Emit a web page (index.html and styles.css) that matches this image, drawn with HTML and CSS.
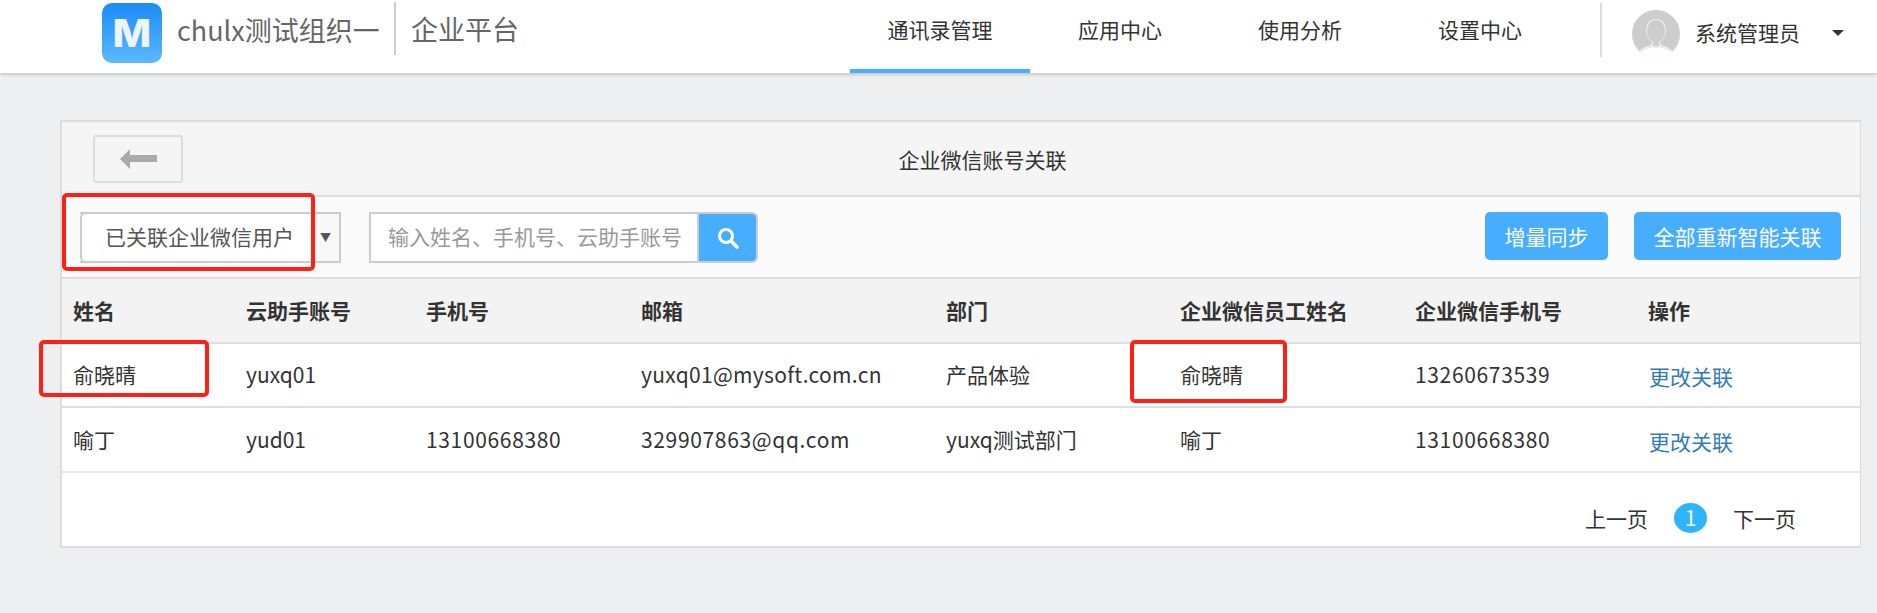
FILE: index.html
```html
<!DOCTYPE html>
<html lang="zh-CN">
<head>
<meta charset="utf-8">
<title>企业微信账号关联</title>
<link rel="stylesheet" href="styles.css">
</head>
<body>
<header class="topbar">
  <div class="brand">
    <div class="logo"><span class="logo-m">M</span></div>
    <span class="org">chulx测试组织一</span>
    <span class="platform">企业平台</span>
  </div>
  <nav class="nav">
    <a class="nav-item active">通讯录管理</a>
    <a class="nav-item">应用中心</a>
    <a class="nav-item">使用分析</a>
    <a class="nav-item">设置中心</a>
  </nav>
  <div class="user">
    <svg class="avatar" viewBox="0 0 48 48" aria-hidden="true">
      <defs><clipPath id="disc"><circle cx="24" cy="24" r="24"/></clipPath></defs>
      <circle cx="24" cy="24" r="24" fill="#cdcdcd"/>
      <g clip-path="url(#disc)">
        <path d="M4 49 C5 39 13 37 19 35 C20 33 20 32 19 31 C16 28 14 25 14 20 C14 13 18 9 24 9 C30 9 34 13 34 20 C34 25 32 28 29 31 C28 32 28 33 29 35 C35 37 43 39 44 49 Z" fill="#ececec"/>
        <ellipse cx="24" cy="21" rx="9" ry="11" fill="#cdcdcd"/>
        <path d="M21 29 H27 V36 H21 Z" fill="#cdcdcd"/>
        <path d="M3 49 C6 41 14 40 20 37 C22 39 26 39 28 37 C34 40 42 41 45 49 Z" fill="#fff"/>
      </g>
    </svg>
    <span class="user-name">系统管理员</span>
    <span class="caret"></span>
  </div>
</header>

<main class="main">
  <section class="panel">
    <div class="title-bar">
      <button class="back" type="button" aria-label="返回">
        <svg width="37" height="20" viewBox="0 0 37 20" aria-hidden="true"><path d="M0 10 L10 0 L10 6 L37 6 L37 13 L10 13 L10 20 Z" fill="#aaa"/></svg>
      </button>
      <h1 class="title">企业微信账号关联</h1>
    </div>

    <div class="toolbar">
      <div class="select">
        <span class="select-value">已关联企业微信用户</span>
        <span class="select-arrow">▼</span>
      </div>
      <div class="search">
        <span class="search-input">输入姓名、手机号、云助手账号</span>
        <button class="search-btn" type="button" aria-label="搜索">
          <svg width="22" height="22" viewBox="0 0 22 22" aria-hidden="true"><circle cx="9" cy="9" r="6.500" fill="none" stroke="#fff" stroke-width="3"/><path d="M14 14 L20 20" stroke="#fff" stroke-width="3.500" stroke-linecap="round"/></svg>
        </button>
      </div>
      <div class="actions">
        <button class="btn" type="button">增量同步</button>
        <button class="btn" type="button">全部重新智能关联</button>
      </div>
    </div>

    <table class="grid">
      <colgroup>
        <col class="c1"><col class="c2"><col class="c3"><col class="c4"><col class="c5"><col class="c6"><col class="c7"><col class="c8">
      </colgroup>
      <thead>
        <tr><th>姓名</th><th>云助手账号</th><th>手机号</th><th>邮箱</th><th>部门</th><th>企业微信员工姓名</th><th>企业微信手机号</th><th>操作</th></tr>
      </thead>
      <tbody>
        <tr><td>俞晓晴</td><td>yuxq01</td><td></td><td class="mail">yuxq01@mysoft.com.cn</td><td>产品体验</td><td>俞晓晴</td><td class="num">13260673539</td><td><a class="link">更改关联</a></td></tr>
        <tr><td>喻丁</td><td>yud01</td><td class="num">13100668380</td><td class="num">329907863@qq.com</td><td>yuxq测试部门</td><td>喻丁</td><td class="num">13100668380</td><td><a class="link">更改关联</a></td></tr>
      </tbody>
    </table>

    <div class="pager">
      <a class="page-link">上一页</a>
      <span class="page-num">1</span>
      <a class="page-link">下一页</a>
    </div>
  </section>
</main>

<div class="mark mark-select"></div>
<div class="mark mark-name"></div>
<div class="mark mark-wx"></div>
</body>
</html>
```

FILE: styles.css
```css
* { box-sizing: border-box; }
html, body { margin: 0; padding: 0; }
body {
  height: 613px;
  overflow: hidden;
  background: #eeeff1;
  color: #333;
  font-family: "Noto Sans CJK SC", "Noto Sans", sans-serif;
  font-size: 21px;
}
.topbar {
  display: flex;
  height: 73px;
  background: #fff;
  box-shadow: 0 2px 3px rgba(0, 0, 0, .16);
  position: relative;
}
.brand {
  display: flex;
  align-items: flex-start;
  width: 850px;
  padding: 3px 0 0 102px;
}
.logo {
  width: 60px;
  height: 60px;
  border-radius: 10px;
  background: linear-gradient(#1a8cf5, #5cb8ff);
  display: flex;
  align-items: center;
  justify-content: center;
}
.logo-m {
  display: block;
  color: #eef4fb;
  font: 800 38px/1 Inter, "Noto Sans", sans-serif;
  transform: scaleX(1.08);
}
.org {
  margin-left: 15px;
  color: #666;
  font-size: 27px;
  line-height: 54px;
  width: 217px;
  white-space: nowrap;
}
.platform {
  height: 53px;
  margin-top: -1px;
  padding-left: 15px;
  border-left: 2px solid #ccc;
  color: #666;
  font-size: 27px;
  line-height: 54px;
}
.nav { display: flex; width: 720px; }
.nav-item {
  width: 180px;
  height: 73px;
  text-align: center;
  line-height: 58px;
  color: #333;
}
.nav-item.active { border-bottom: 4px solid #47aeff; }
.user {
  display: flex;
  align-items: flex-start;
  margin: 3px 0 0 30px;
  height: 54px;
  padding-left: 30px;
  border-left: 2px solid #ddd;
}
.avatar { width: 48px; height: 48px; margin-top: 7px; flex: none; }
.user-name { margin-left: 15px; line-height: 58px; width: 106px; white-space: nowrap; flex: none; }
.caret {
  flex: none;
  margin: 27px 0 0 31px;
  border-left: 6px solid transparent;
  border-right: 6px solid transparent;
  border-top: 6px solid #333;
}
.main { padding: 47px 0 0 60px; }
.panel {
  width: 1801px;
  height: 428px;
  background: #fff;
  border: 2px solid #ddd;
  border-right-width: 1px;
}
.title-bar {
  display: flex;
  align-items: flex-start;
  height: 75px;
  padding: 13px 0 0 31px;
  background: #f5f5f5;
  border-bottom: 2px solid #ddd;
}
.back {
  width: 90px;
  height: 48px;
  padding: 0;
  background: transparent;
  border: 2px solid #ddd;
  border-radius: 3px;
  display: flex;
  align-items: center;
  justify-content: center;
}
.title {
  flex: 1;
  margin: 0;
  padding-right: 78px;
  text-align: center;
  font-size: 21px;
  font-weight: 400;
  line-height: 48px;
  color: #333;
}
.toolbar {
  display: flex;
  align-items: flex-start;
  height: 82px;
  padding: 15px 0 0 18px;
  background: #fafafa;
  border-bottom: 2px solid #ddd;
}
.select {
  display: flex;
  width: 261px;
  height: 51px;
  border: 2px solid #ccc;
  border-left-width: 0;
  background: #f8f8f8;
}
.select-value {
  flex: none;
  width: 232px;
  height: 51px;
  margin: -2px 0;
  padding-left: 23px;
  background: #fff;
  border: 2px solid #ccc;
  border-right: 0;
  border-radius: 6px 0 0 6px;
  color: #555;
  line-height: 45px;
  white-space: nowrap;
}
.select-arrow {
  width: 29px;
  font-size: 11px;
  color: #555;
  text-align: center;
  line-height: 46px;
}
.search {
  display: flex;
  width: 389px;
  height: 51px;
  margin-left: 28px;
  background: #fff;
  border: 2px solid #ccc;
  border-radius: 0 6px 6px 0;
}
.search-input {
  flex: 1;
  padding-left: 17px;
  color: #999;
  line-height: 45px;
  white-space: nowrap;
  overflow: hidden;
}
.search-btn {
  width: 59px;
  padding: 0;
  background: #47aeff;
  border: 0;
  border-left: 2px solid #ccc;
  border-radius: 0 4px 4px 0;
  display: flex;
  align-items: center;
  justify-content: center;
}
.actions {
  display: flex;
  gap: 26px;
  margin-left: auto;
  padding-right: 19px;
}
.btn {
  height: 48px;
  padding: 0 19.500px;
  background: #47aeff;
  border: 0;
  border-radius: 5px;
  color: #fff;
  font: inherit;
  line-height: 46px;
}
.grid {
  width: 100%;
  table-layout: fixed;
  border-collapse: separate;
  border-spacing: 0;
}
.c1 { width: 172px; }
.c2 { width: 180px; }
.c3 { width: 215px; }
.c4 { width: 305px; }
.c5 { width: 234px; }
.c6 { width: 235px; }
.c7 { width: 233px; }
.grid th, .grid td {
  padding: 0 12px;
  text-align: left;
  white-space: nowrap;
  border-bottom: 2px solid #dedee2;
}
.grid th:first-child, .grid td:first-child { padding-left: 11px; }
.grid th {
  height: 65px;
  padding-bottom: 2px;
  background: #f3f3f3;
  font-weight: 700;
  color: #333;
}
.grid td { height: 64px; padding-bottom: 2px; }
.grid td.num { letter-spacing: .65px; }
.grid td.mail { letter-spacing: .3px; }
.grid tbody tr:last-child td { height: 65px; border-bottom-color: #e6e6ea; }
.link { color: #337ab7; position: relative; top: 2px; left: 1px; }
.pager {
  display: flex;
  justify-content: flex-end;
  align-items: center;
  gap: 26px;
  padding: 30px 64px 0 0;
}
.page-link { color: #333; }
.page-num {
  width: 33px;
  height: 30px;
  border-radius: 50%;
  background: #2cb5f8;
  color: #fff;
  text-align: center;
  line-height: 29px;
}
.mark {
  position: absolute;
  border: 4px solid #ff2015;
  border-radius: 5px;
}
.mark-select { left: 62px; top: 193px; width: 253px; height: 78px; }
.mark-name { left: 39px; top: 340px; width: 170px; height: 57px; }
.mark-wx { left: 1130px; top: 340px; width: 157px; height: 63px; }
```
